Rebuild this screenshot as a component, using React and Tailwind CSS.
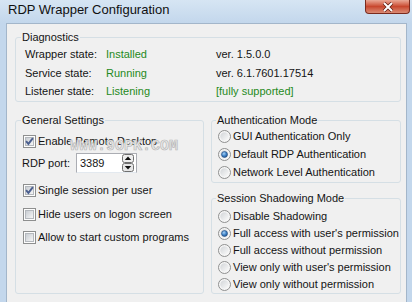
import React from "react";

// Windows 7 style check box, 13x13
function CheckBox({ on }) {
  return (
    <svg width="13" height="13" viewBox="0 0 13 13" className="shrink-0">
      <defs>
        <linearGradient id="cbFill" x1="0" y1="0" x2="1" y2="1">
          <stop offset="0" stopColor="#c6cbd1" />
          <stop offset="1" stopColor="#f8f8f8" />
        </linearGradient>
      </defs>
      <rect x="0.5" y="0.5" width="12" height="12" fill="#fdfdfd" stroke="#8e8f8f" />
      <rect x="2.5" y="2.5" width="8" height="8" fill="url(#cbFill)" stroke="#b4b8bd" />
      {on && (
        <path d="M3.1 6.2 L5.4 8.9 L9.9 3.2" fill="none" stroke="#4b5f8f" strokeWidth="1.9" />
      )}
    </svg>
  );
}

function Radio({ on }) {
  return (
    <svg width="13" height="13" viewBox="0 0 13 13" className="shrink-0">
      <defs>
        <linearGradient id="rbOuter" x1="0" y1="0" x2="1" y2="1">
          <stop offset="0" stopColor="#d2d5d8" />
          <stop offset="1" stopColor="#fbfbfb" />
        </linearGradient>
        <radialGradient id="rbDot" cx="0.4" cy="0.35" r="0.7">
          <stop offset="0" stopColor="#a9d2f5" />
          <stop offset="0.55" stopColor="#3f83c8" />
          <stop offset="1" stopColor="#1b4f8c" />
        </radialGradient>
      </defs>
      <circle cx="6.5" cy="6.5" r="6" fill="#f6f6f6" stroke="#8e8f8f" />
      <circle cx="6.5" cy="6.5" r="4.2" fill="url(#rbOuter)" />
      {on && <circle cx="6.5" cy="6.5" r="3" fill="url(#rbDot)" stroke="#254a7c" strokeWidth="0.6" />}
    </svg>
  );
}

function Spinner() {
  return (
    <svg width="12" height="18" viewBox="0 0 12 18" className="shrink-0">
      <rect x="0.5" y="0.5" width="11" height="8" rx="2" fill="#eeeeee" stroke="#707070" />
      <path d="M2.8 6 L6 2.6 L9.2 6 Z" fill="#111" />
      <rect x="0.5" y="9.5" width="11" height="8" rx="2" fill="#e6e6e6" stroke="#707070" />
      <path d="M2.8 12 L9.2 12 L6 15.4 Z" fill="#111" />
    </svg>
  );
}

const fieldsetClass = "border border-[#d5dfe5] rounded-[3px] p-0 m-0 min-w-0";

function App() {
  return (
    <div className="relative w-[412px] h-[302px] overflow-hidden bg-[#c3d7ec] font-['Liberation_Sans',Arial,sans-serif] text-[11px] text-[#141414]">
      {/* title bar */}
      <div className="h-[23px] pl-[8px] pt-[2px] text-[13px] leading-[16px] text-[#101010] bg-gradient-to-b from-[#d6e5f3] to-[#c3d7ec]">
        RDP Wrapper Configuration
      </div>
      <div className="absolute top-0 left-[365px] w-[45px] h-[14px] rounded-b-[4px] border border-t-0 border-[#7a2a1d] bg-gradient-to-b from-[#e9a896] via-[#c8472e] to-[#d98a74] flex items-center justify-center">
        <svg width="12" height="10" viewBox="0 0 12 10">
          <path d="M2 1 L10 9 M10 1 L2 9" stroke="#5a1a10" strokeWidth="3.4" />
          <path d="M2 1 L10 9 M10 1 L2 9" stroke="#ffffff" strokeWidth="2" />
        </svg>
      </div>

      {/* client area */}
      <div className="ml-[6px] w-[401px] h-[279px] bg-[#f0f0f0] border border-b-0 border-[#a3b6ca] pt-[6px] pl-[8px]">
        <fieldset className={fieldsetClass + " w-[386px]"}>
          <legend className="ml-[5px] px-[1px] leading-[15px]">Diagnostics</legend>
          <div className="pl-[9px]">
            <div className="flex h-[18.5px] items-center">
              <span className="w-[81px]">Wrapper state:</span>
              <span className="w-[110px] text-[#1f8a22]">Installed</span>
              <span>ver. 1.5.0.0</span>
            </div>
            <div className="flex h-[18.5px] items-center">
              <span className="w-[81px]">Service state:</span>
              <span className="w-[110px] text-[#1f8a22]">Running</span>
              <span>ver. 6.1.7601.17514</span>
            </div>
            <div className="flex h-[18.5px] items-center">
              <span className="w-[81px]">Listener state:</span>
              <span className="w-[110px] text-[#1f8a22]">Listening</span>
              <span className="text-[#1f8a22]">[fully supported]</span>
            </div>
          </div>
        </fieldset>

        <div className="flex items-start gap-[7px] mt-[11px]">
          <fieldset className={fieldsetClass + " w-[189px]"}>
            <legend className="ml-[5px] px-[1px] leading-[15px]">General Settings</legend>
            <div className="h-[165px] pl-[7px] pt-[3.5px]">
              <div className="flex h-[20px] items-center gap-[2px]">
                <CheckBox on />
                <span>Enable Remote Desktop</span>
              </div>
              <div className="flex h-[22px] items-center mt-[1px]">
                <span className="w-[54px] -ml-[1px]">RDP port:</span>
                <div className="flex items-center justify-between w-[61px] h-[20px] bg-white border border-[#abadb3] border-b-[#e3e9ef] pl-[3px] pr-[2px]">
                  <span>3389</span>
                  <Spinner />
                </div>
              </div>
              <div className="flex h-[20px] items-center gap-[2px] mt-[6px]">
                <CheckBox on />
                <span>Single session per user</span>
              </div>
              <div className="flex h-[20px] items-center gap-[2px] mt-[4px]">
                <CheckBox />
                <span>Hide users on logon screen</span>
              </div>
              <div className="flex h-[20px] items-center gap-[2px] mt-[3px]">
                <CheckBox />
                <span>Allow to start custom programs</span>
              </div>
            </div>
          </fieldset>

          <div className="flex flex-col w-[190px]">
            <fieldset className={fieldsetClass}>
              <legend className="ml-[4px] px-[1px] leading-[15px]">Authentication Mode</legend>
              <div className="pl-[6px]">
                {[
                  ["GUI Authentication Only", false],
                  ["Default RDP Authentication", true],
                  ["Network Level Authentication", false],
                ].map(([label, on]) => (
                  <div key={label} className="flex h-[18px] items-center gap-[2px]">
                    <Radio on={on} />
                    <span>{label}</span>
                  </div>
                ))}
              </div>
            </fieldset>
            <fieldset className={fieldsetClass + " mt-[8px]"}>
              <legend className="ml-[4px] px-[1px] leading-[15px]">Session Shadowing Mode</legend>
              <div className="pl-[6px] pt-[2px]">
                {[
                  ["Disable Shadowing", false],
                  ["Full access with user's permission", true],
                  ["Full access without permission", false],
                  ["View only with user's permission", false],
                  ["View only without permission", false],
                ].map(([label, on]) => (
                  <div key={label} className="flex h-[17px] items-center gap-[2px]">
                    <Radio on={on} />
                    <span>{label}</span>
                  </div>
                ))}
              </div>
            </fieldset>
          </div>
        </div>
      </div>

      {/* site watermark baked into the screenshot */}
      <div className="absolute left-[70px] top-[139px] font-['Liberation_Mono',monospace] text-[15px] leading-[16px] font-bold text-[#e9e9e9] [-webkit-text-stroke:0.7px_#b9b9b9] pointer-events-none">
        WWW.9OPK.COM
      </div>
    </div>
  );
}

export default App;
